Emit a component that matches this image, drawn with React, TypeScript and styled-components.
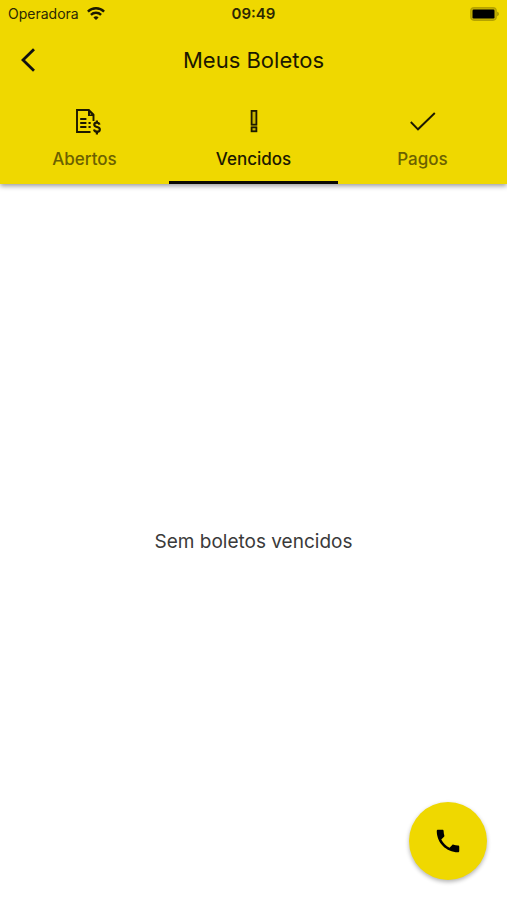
import React, { useState } from "react";
import styled, { createGlobalStyle } from "styled-components";

const YELLOW = "#efd800";

const GlobalStyle = createGlobalStyle`
  *, *::before, *::after { box-sizing: border-box; }
  body {
    margin: 0;
    background: #fff;
    color: #111;
    font-family: Inter, "Liberation Sans", sans-serif;
  }
  button { font: inherit; }
`;

const Screen = styled.div`
  display: flex;
  flex-direction: column;
  min-height: 100vh;
`;

const Header = styled.header`
  background: ${YELLOW};
  box-shadow: 0 2px 5px rgba(0, 0, 0, 0.4);
`;

const StatusBar = styled.div`
  display: grid;
  grid-template-columns: 1fr auto 1fr;
  align-items: center;
  height: 28px;
  padding: 0 8px;
  font-size: 14px;
  line-height: 20px;
`;

const Carrier = styled.span`
  display: flex;
  align-items: center;
  gap: 8px;
  color: #2c2803;
`;

const Clock = styled.time`
  font-size: 15px;
  font-weight: 600;
  color: #2c2803;
`;

const BatterySlot = styled.span`
  display: flex;
  justify-content: flex-end;
`;

const TitleBar = styled.div`
  display: grid;
  grid-template-columns: 56px 1fr 56px;
  align-items: center;
  height: 64px;
`;

const BackButton = styled.button`
  display: flex;
  align-items: center;
  justify-content: center;
  height: 56px;
  padding: 0;
  border: 0;
  background: none;
  color: #111;
  cursor: pointer;
`;

const Title = styled.h1`
  margin: 0;
  text-align: center;
  font-size: 22px;
  line-height: 28px;
  font-weight: 400;
  color: #1c1900;
`;

const TabList = styled.div`
  display: grid;
  grid-template-columns: repeat(3, 1fr);
`;

const Tab = styled.button<{ $active: boolean }>`
  display: flex;
  flex-direction: column;
  align-items: center;
  gap: 11px;
  height: 92px;
  padding: 16px 0 0;
  border: 0;
  border-bottom: 3px solid ${(p) => (p.$active ? "#0a0900" : "transparent")};
  background: none;
  color: ${(p) => (p.$active ? "#1c1900" : "#6b6100")};
  font-size: 17px;
  line-height: 24px;
  font-weight: 500;
  cursor: pointer;

  svg { color: #1c1900; }
`;

const Content = styled.main`
  flex: 1;
  display: flex;
  align-items: center;
  justify-content: center;
  padding: 16px;
`;

const EmptyMessage = styled.p`
  margin: 0;
  text-align: center;
  font-size: 19px;
  line-height: 28px;
  color: #3a3a3a;
`;

const CallButton = styled.button`
  position: fixed;
  right: 20px;
  bottom: 20px;
  display: flex;
  align-items: center;
  justify-content: center;
  width: 78px;
  height: 78px;
  padding: 0;
  border: 0;
  border-radius: 50%;
  background: ${YELLOW};
  color: #000;
  box-shadow: 0 2px 4px rgba(0, 0, 0, 0.3);
  cursor: pointer;
`;

const WifiIcon = () => (
  <svg width="18" height="14" viewBox="0 0 18 14" fill="none" stroke="#1c1900" strokeWidth="2.4" aria-hidden="true">
    <path d="M.9 4.6a11.6 11.6 0 0 1 16.2 0" />
    <path d="M3.9 7.9a7.3 7.3 0 0 1 10.2 0" />
    <path d="M9 13.1 6.4 10.5a3.7 3.7 0 0 1 5.2 0z" fill="#1c1900" stroke="none" />
  </svg>
);

const BatteryIcon = () => (
  <svg width="29" height="14" viewBox="0 0 29 14" aria-hidden="true">
    <rect x=".8" y=".8" width="25.4" height="12.4" rx="3.4" fill="#c9b500" stroke="#b5a300" strokeWidth="1.4" />
    <rect x="2.5" y="2.5" width="22" height="9" rx="1.2" fill="#000" />
    <path d="M27.2 4.8c2.2.6 2.2 3.8 0 4.4z" fill="#a39300" />
  </svg>
);

const BackIcon = () => (
  <svg width="24" height="24" viewBox="0 0 24 24" fill="none" stroke="currentColor" strokeWidth="2.8" aria-hidden="true">
    <path d="M18 1.2 7 12l11 10.8" />
  </svg>
);

const BillIcon = () => (
  <svg width="32" height="28" viewBox="-5 0 32 28" fill="none" stroke="currentColor" strokeWidth="1.9" aria-hidden="true">
    <path d="M16.5 24H3V2h11.8l4.7 4.700V13" />
    <path d="M14 1.5 20.3 8H14z" fill="currentColor" stroke="none" />
    <path d="m16 5.1 1.4 1.5H16z" fill={YELLOW} stroke="none" />
    <path d="M6.2 11h6.200M6.200 15h6.200M6.200 19h6.200M14.500 15h2.200M14.500 19h2.200" />
    <path strokeWidth="2.2" d="M25.600 16.600c-.4-1.300-1.400-1.900-2.700-1.900-1.600 0-2.600.8-2.600 2.100 0 3 5.500 1.500 5.500 4.600 0 1.500-1.100 2.300-2.800 2.300-1.600 0-2.700-.700-3-2.200M22.900 12.400v2.500M22.900 23.500v3" />
  </svg>
);

const AlertIcon = () => (
  <svg width="28" height="28" viewBox="0 0 28 28" fill="none" stroke="currentColor" strokeWidth="1.8" aria-hidden="true">
    <rect x="11.6" y="2.900" width="4.8" height="13.800" fill="#c4b200" />
    <rect x="11.6" y="19.300" width="4.8" height="4" fill="#c4b200" />
  </svg>
);

const CheckIcon = () => (
  <svg width="28" height="28" viewBox="0 0 28 28" fill="none" stroke="currentColor" strokeWidth="1.9" aria-hidden="true">
    <path d="m1.800 14 7.200 7.300L25.800 5" />
  </svg>
);

const PhoneIcon = () => (
  <svg width="30" height="30" viewBox="0 0 24 24" fill="currentColor" aria-hidden="true">
    <path d="M6.62 10.79c1.44 2.83 3.76 5.14 6.59 6.59l2.2-2.2c.27-.27.67-.36 1.02-.24 1.12.37 2.33.57 3.57.57.55 0 1 .45 1 1V20c0 .55-.45 1-1 1C10.61 21 3 13.39 3 4c0-.55.45-1 1-1h3.5c.55 0 1 .45 1 1 0 1.25.2 2.45.57 3.57.11.35.03.74-.25 1.02z" />
  </svg>
);

const tabs = [
  { label: "Abertos", Icon: BillIcon },
  { label: "Vencidos", Icon: AlertIcon },
  { label: "Pagos", Icon: CheckIcon },
];

export default function App() {
  const [active, setActive] = useState("Vencidos");

  return (
    <>
      <GlobalStyle />
      <Screen>
        <Header>
          <StatusBar>
            <Carrier>
              Operadora
              <WifiIcon />
            </Carrier>
            <Clock>09:49</Clock>
            <BatterySlot>
              <BatteryIcon />
            </BatterySlot>
          </StatusBar>
          <TitleBar>
            <BackButton type="button" aria-label="Voltar">
              <BackIcon />
            </BackButton>
            <Title>Meus Boletos</Title>
          </TitleBar>
          <TabList role="tablist">
            {tabs.map(({ label, Icon }) => (
              <Tab
                key={label}
                type="button"
                role="tab"
                aria-selected={active === label}
                $active={active === label}
                onClick={() => setActive(label)}
              >
                <Icon />
                {label}
              </Tab>
            ))}
          </TabList>
        </Header>
        <Content>
          <EmptyMessage>Sem boletos {active.toLowerCase()}</EmptyMessage>
        </Content>
      </Screen>
      <CallButton type="button" aria-label="Ligar">
        <PhoneIcon />
      </CallButton>
    </>
  );
}
